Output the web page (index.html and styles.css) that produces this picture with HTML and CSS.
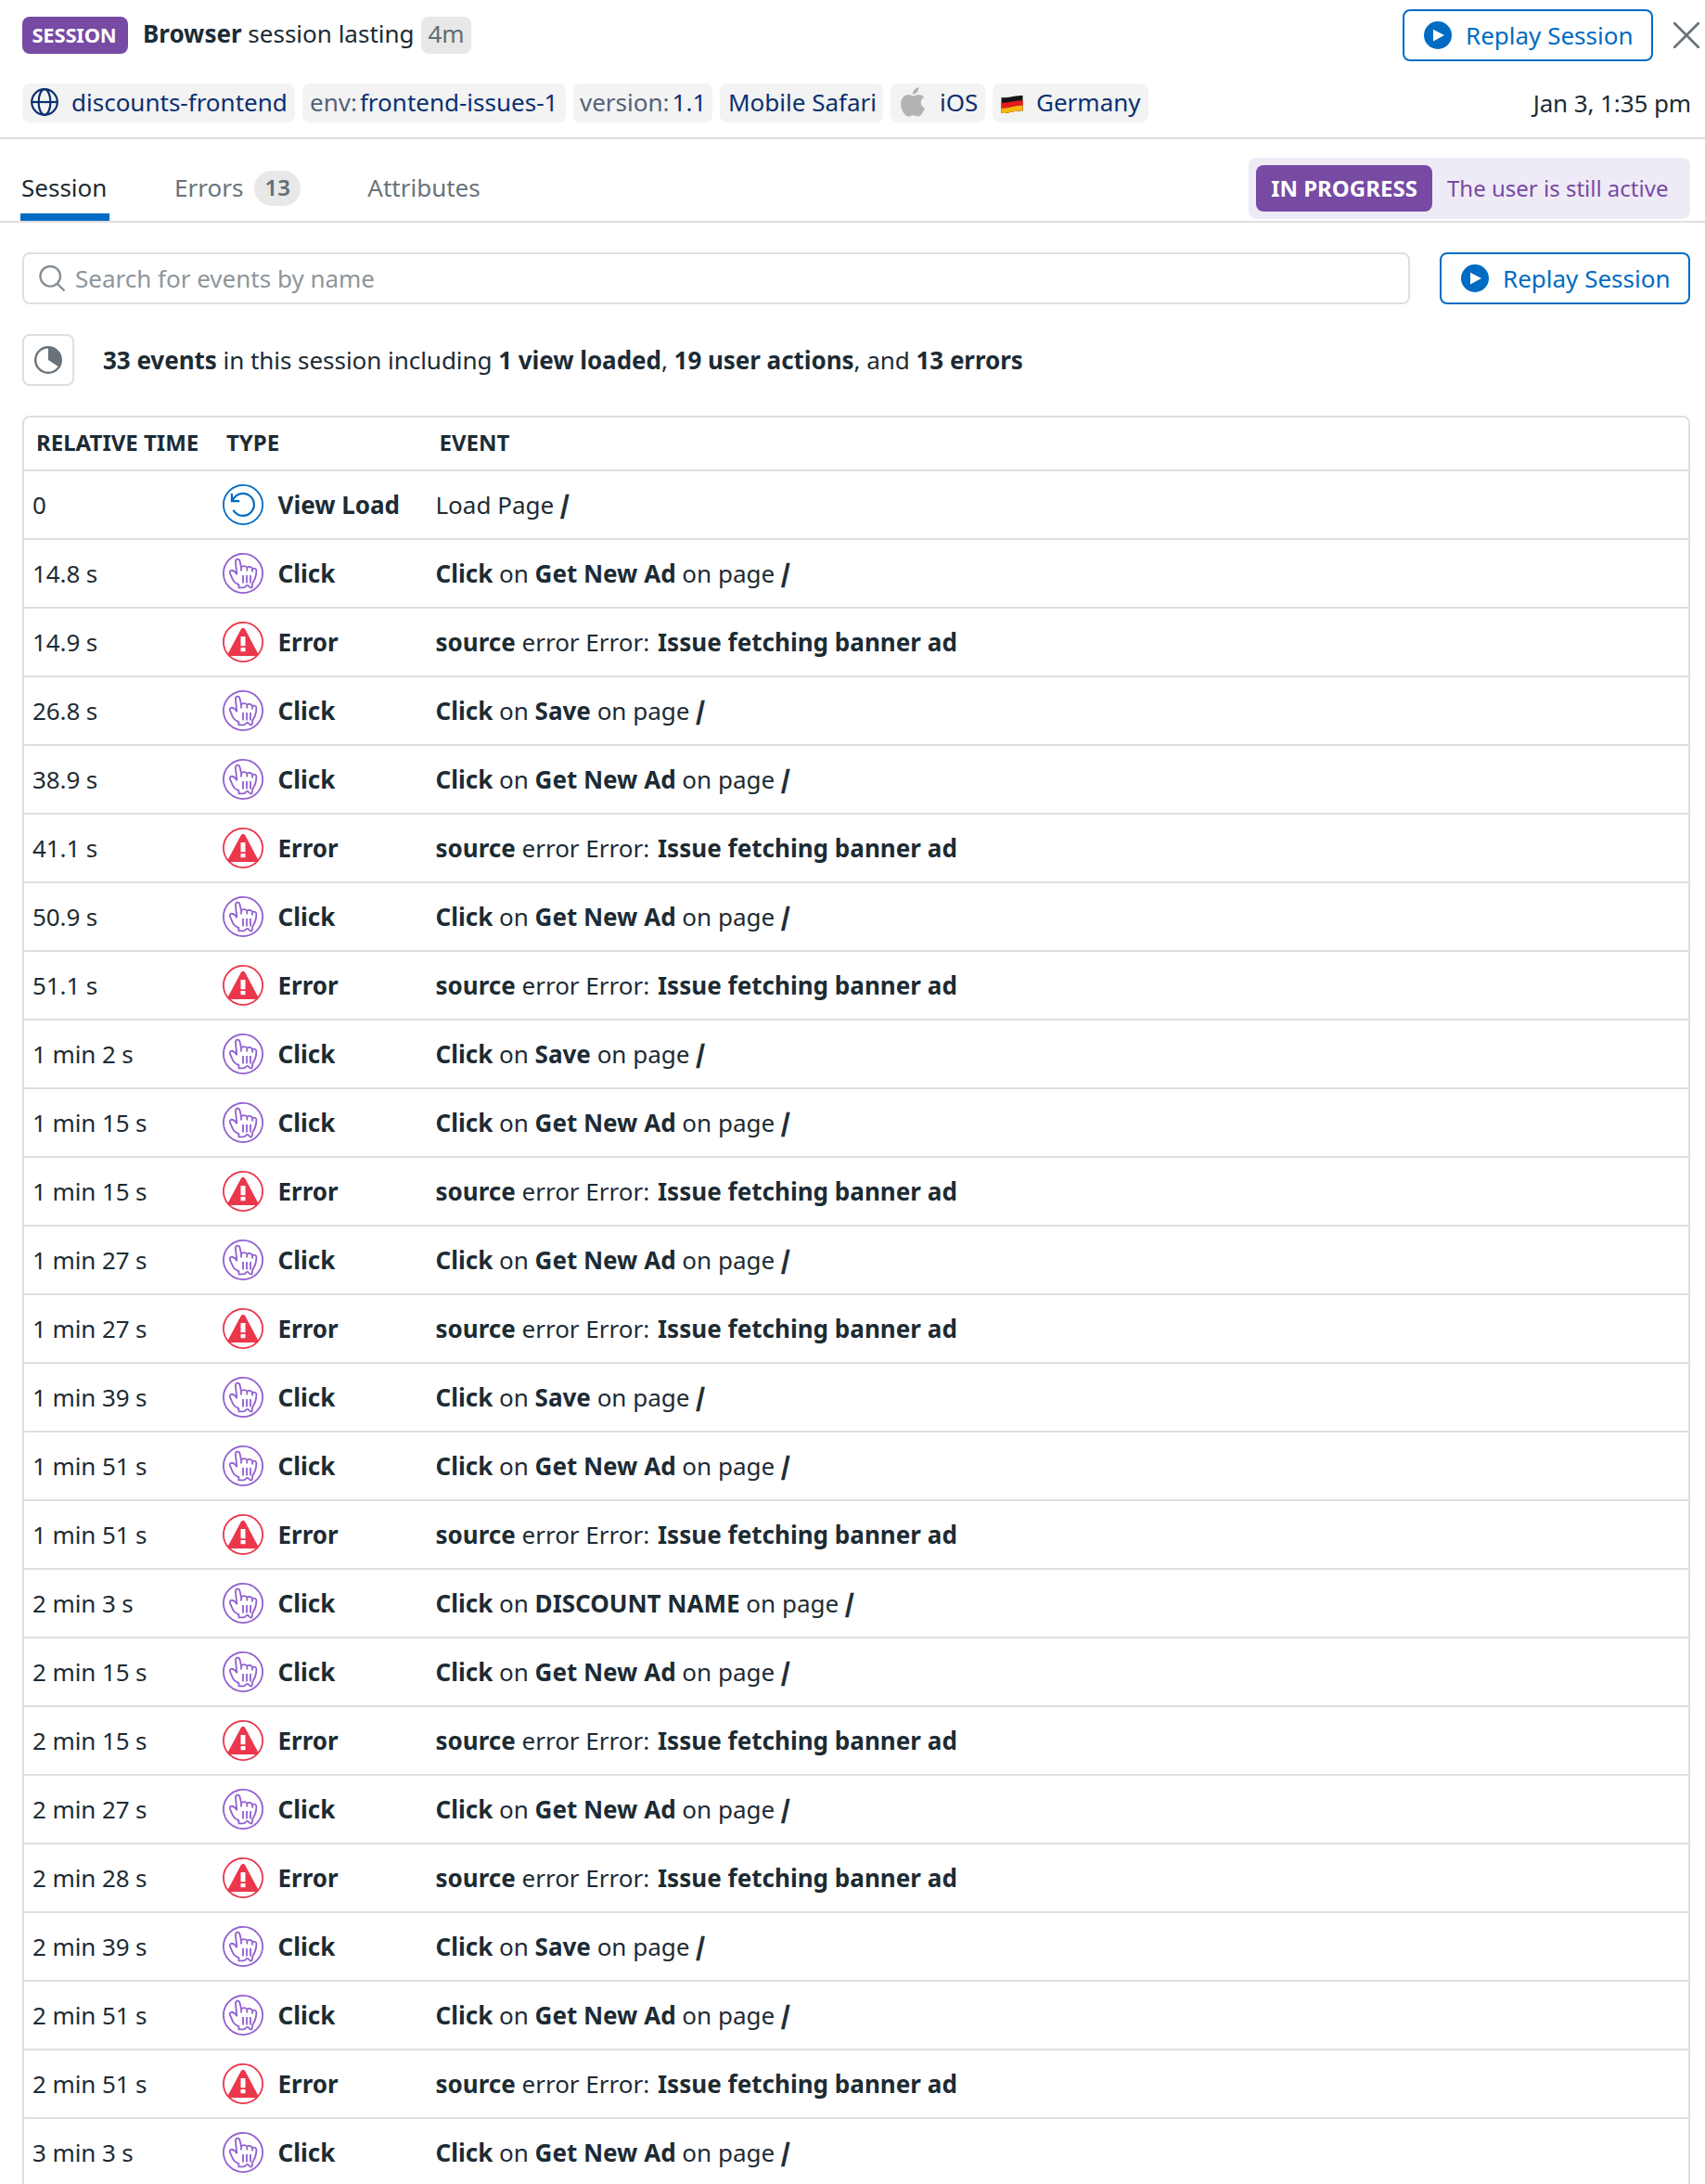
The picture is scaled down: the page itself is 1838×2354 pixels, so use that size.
FILE: index.html
```html
<!DOCTYPE html>
<html lang="en">
<head>
<meta charset="utf-8">
<title>Session</title>
<link rel="stylesheet" href="styles.css">
</head>
<body>
<svg class="sprite" width="0" height="0">
  <symbol id="play" viewBox="0 0 30 30"><circle cx="15" cy="15" r="15" fill="#006bc2"/><path d="M10 8.8v12.6L22 15z" fill="#fff"/></symbol>
  <symbol id="load" viewBox="0 0 44 44"><circle cx="22" cy="22" r="21.1" fill="none" stroke="#006bc2" stroke-width="1.8"/><path d="M11.4 27.8A12 12 0 1 0 10.6 17.8M9.9 10v8.1h8.3" fill="none" stroke="#006bc2" stroke-width="2.2"/></symbol>
  <symbol id="click" viewBox="0 0 44 44"><g fill="none" stroke="#9160cf" stroke-width="1.8" stroke-linejoin="round"><circle cx="22" cy="22" r="21.1"/><path d="M15.3 23.3 14 10.2C13.3 5.8 17.8 5.4 18.6 9.2L20 15.2V19.4M15.3 23.3C14.4 21 11.5 18.5 9.2 18.8C7.3 19.2 7.6 21.3 8.3 22.6L11 28.9C12 31.2 13.2 32.6 17.4 34.1V37.4H22.6C25 37.4 24.6 34.8 26.6 34.8C28.6 34.8 28 37.5 31.2 37.5C32.6 36 31.5 34 32.5 32.2C34.4 29.3 35.5 27 36 23.5L36.4 19.5C36.6 17 34.4 16.3 32 16.9C30.7 14.6 28 14.4 26.3 15.5C24.7 14 22 14 20.2 15.2M26.3 15.3V19.5M32 16.7V20.4M22 24v8.4M26 24v8.4M30 24v8.4"/></g></symbol>
  <symbol id="error" viewBox="0 0 44 44"><circle cx="22" cy="22" r="21.1" fill="none" stroke="#eb364b" stroke-width="1.8"/><path d="M19.6 8.4Q22 5.2 24.4 8.4L38.6 35.2Q38.3 37 36.4 37H7.6Q5.7 37 5.4 35.2z" fill="#eb364b"/><path d="M19.5 16h5v10.2h-5zM19.5 28h5v4.2h-5z" fill="#fff"/></symbol>
</svg>
<div class="panel">
  <header class="head">
    <div class="title-row">
      <span class="kind">SESSION</span>
      <span class="title"><b>Browser</b> session lasting</span>
      <span class="duration">4m</span>
      <button class="replay push"><svg class="i30"><use href="#play"/></svg>Replay Session</button>
      <svg class="close" viewBox="0 0 28 28"><path d="M1 1l26 26M27 1L1 27" stroke="#69737b" stroke-width="2.8" stroke-linecap="round"/></svg>
    </div>
    <div class="tag-row">
      <span class="tag t1"><svg class="globe" viewBox="0 0 30 30"><g fill="none" stroke="#0b3070" stroke-width="2.2"><circle cx="15" cy="15" r="13.8"/><ellipse cx="15" cy="15" rx="6.4" ry="13.8"/><path d="M1 15h28"/></g></svg>discounts-frontend</span>
      <span class="tag t2"><i>env:</i>frontend-issues-1</span>
      <span class="tag t3"><i>version:</i>1.1</span>
      <span class="tag t4">Mobile Safari</span>
      <span class="tag t5"><svg class="apple" viewBox="0 0 26 32"><path d="M19.4.3c.2 3.800-3 7.400-6.500 7.300C12.500 4.200 15.800.700 19.400.300zM13.400 9.700c1.600 0 3.200-1.600 6-1.600 2.300 0 4.400 1.200 5.700 3-4.800 2.900-4.200 9.300.900 11.500-1.600 4.500-4.400 9-7.100 9-2 0-2.900-1.300-5.300-1.300-2.500 0-3.500 1.300-5.300 1.300C4.600 31.600.2 25 .2 18.100c0-6 3.700-10 7.900-10 2.300 0 4 1.600 5.300 1.600z" fill="#b3b3b3"/></svg>iOS</span>
      <span class="tag t6"><svg class="flag" viewBox="0 0 24 21"><defs><clipPath id="wave"><path d="M.5 3C7 4.600 14 .2 23.500 1v16.500C14 16.500 7 21.600.5 19.500z"/></clipPath></defs><g clip-path="url(#wave)"><path d="M0 0h24v21H0z" fill="#151515"/><path d="M0 8.500C7 10 15 5.500 24 6.500V21H0z" fill="#e31c1c"/><path d="M0 14.500c7 1.500 15-3.500 24-2.500v9H0z" fill="#f2b90d"/></g></svg>Germany</span>
      <time class="date">Jan 3, 1:35 pm</time>
    </div>
  </header>
  <nav class="tabs">
    <a class="tab active">Session</a>
    <a class="tab errors">Errors<span class="count">13</span></a>
    <a class="tab">Attributes</a>
    <div class="status"><b>IN PROGRESS</b><span>The user is still active</span></div>
  </nav>
  <main class="content">
    <div class="search-row">
      <div class="search"><svg class="lens" viewBox="0 0 29 28"><g fill="none" stroke="#858e94" stroke-width="2.300"><circle cx="12.200" cy="11.800" r="10.800"/><path d="M19.500 19.500l8 8"/></g></svg>Search for events by name</div>
      <button class="replay"><svg class="i30"><use href="#play"/></svg>Replay Session</button>
    </div>
    <div class="summary">
      <span class="chart"><svg class="i30" viewBox="0 0 30 30"><circle cx="15" cy="15" r="13.800" fill="none" stroke="#69737b" stroke-width="2.400"/><path d="M15 15V1a14 14 0 0 1 11.600 21.500z" fill="#69737b"/></svg></span>
      <p><b>33 events</b> in this session including <b>1 view loaded</b>, <b>19 user actions</b>, and <b>13 errors</b></p>
    </div>
    <section class="table">
      <div class="row thead"><span>RELATIVE TIME</span><span>TYPE</span><span>EVENT</span></div>
      <div class="row"><span>0</span><b><svg><use href="#load"/></svg>View Load</b><span>Load Page <b class="path">/</b></span></div>
      <div class="row"><span>14.8 s</span><b><svg><use href="#click"/></svg>Click</b><span><b>Click</b> on <b>Get New Ad</b> on page <b class="path">/</b></span></div>
      <div class="row"><span>14.9 s</span><b><svg><use href="#error"/></svg>Error</b><span><b>source</b> error Error: <b class="msg">Issue fetching banner ad</b></span></div>
      <div class="row"><span>26.8 s</span><b><svg><use href="#click"/></svg>Click</b><span><b>Click</b> on <b>Save</b> on page <b class="path">/</b></span></div>
      <div class="row"><span>38.9 s</span><b><svg><use href="#click"/></svg>Click</b><span><b>Click</b> on <b>Get New Ad</b> on page <b class="path">/</b></span></div>
      <div class="row"><span>41.1 s</span><b><svg><use href="#error"/></svg>Error</b><span><b>source</b> error Error: <b class="msg">Issue fetching banner ad</b></span></div>
      <div class="row"><span>50.9 s</span><b><svg><use href="#click"/></svg>Click</b><span><b>Click</b> on <b>Get New Ad</b> on page <b class="path">/</b></span></div>
      <div class="row"><span>51.1 s</span><b><svg><use href="#error"/></svg>Error</b><span><b>source</b> error Error: <b class="msg">Issue fetching banner ad</b></span></div>
      <div class="row"><span>1 min 2 s</span><b><svg><use href="#click"/></svg>Click</b><span><b>Click</b> on <b>Save</b> on page <b class="path">/</b></span></div>
      <div class="row"><span>1 min 15 s</span><b><svg><use href="#click"/></svg>Click</b><span><b>Click</b> on <b>Get New Ad</b> on page <b class="path">/</b></span></div>
      <div class="row"><span>1 min 15 s</span><b><svg><use href="#error"/></svg>Error</b><span><b>source</b> error Error: <b class="msg">Issue fetching banner ad</b></span></div>
      <div class="row"><span>1 min 27 s</span><b><svg><use href="#click"/></svg>Click</b><span><b>Click</b> on <b>Get New Ad</b> on page <b class="path">/</b></span></div>
      <div class="row"><span>1 min 27 s</span><b><svg><use href="#error"/></svg>Error</b><span><b>source</b> error Error: <b class="msg">Issue fetching banner ad</b></span></div>
      <div class="row"><span>1 min 39 s</span><b><svg><use href="#click"/></svg>Click</b><span><b>Click</b> on <b>Save</b> on page <b class="path">/</b></span></div>
      <div class="row"><span>1 min 51 s</span><b><svg><use href="#click"/></svg>Click</b><span><b>Click</b> on <b>Get New Ad</b> on page <b class="path">/</b></span></div>
      <div class="row"><span>1 min 51 s</span><b><svg><use href="#error"/></svg>Error</b><span><b>source</b> error Error: <b class="msg">Issue fetching banner ad</b></span></div>
      <div class="row"><span>2 min 3 s</span><b><svg><use href="#click"/></svg>Click</b><span><b>Click</b> on <b>DISCOUNT NAME</b> on page <b class="path">/</b></span></div>
      <div class="row"><span>2 min 15 s</span><b><svg><use href="#click"/></svg>Click</b><span><b>Click</b> on <b>Get New Ad</b> on page <b class="path">/</b></span></div>
      <div class="row"><span>2 min 15 s</span><b><svg><use href="#error"/></svg>Error</b><span><b>source</b> error Error: <b class="msg">Issue fetching banner ad</b></span></div>
      <div class="row"><span>2 min 27 s</span><b><svg><use href="#click"/></svg>Click</b><span><b>Click</b> on <b>Get New Ad</b> on page <b class="path">/</b></span></div>
      <div class="row"><span>2 min 28 s</span><b><svg><use href="#error"/></svg>Error</b><span><b>source</b> error Error: <b class="msg">Issue fetching banner ad</b></span></div>
      <div class="row"><span>2 min 39 s</span><b><svg><use href="#click"/></svg>Click</b><span><b>Click</b> on <b>Save</b> on page <b class="path">/</b></span></div>
      <div class="row"><span>2 min 51 s</span><b><svg><use href="#click"/></svg>Click</b><span><b>Click</b> on <b>Get New Ad</b> on page <b class="path">/</b></span></div>
      <div class="row"><span>2 min 51 s</span><b><svg><use href="#error"/></svg>Error</b><span><b>source</b> error Error: <b class="msg">Issue fetching banner ad</b></span></div>
      <div class="row"><span>3 min 3 s</span><b><svg><use href="#click"/></svg>Click</b><span><b>Click</b> on <b>Get New Ad</b> on page <b class="path">/</b></span></div>
    </section>
  </main>
</div>
</body>
</html>
```
FILE: styles.css
```css
* { box-sizing: border-box; }
body {
  margin: 0;
  background: #fff;
  color: #1c2b34;
  font: 26px/36px "Noto Sans", sans-serif;
}
svg { flex: none; display: block; }
.sprite { position: absolute; }
.panel { width: 1838px; height: 2354px; overflow: hidden; }
.i30 { width: 30px; height: 30px; }

.head { height: 150px; padding: 10px 0 0 24px; border-bottom: 2px solid #dfdfdf; }
.title-row { display: flex; height: 56px; }
.kind {
  width: 114px; height: 40px; margin-top: 8px; padding-right: 2px;
  border-radius: 8px; background: #774aa4; color: #fff;
  font-size: 22px; font-weight: 700; line-height: 38px; text-align: center;
  letter-spacing: -.2px;
}
.title { margin: 8px 0 0 16px; width: 300px; white-space: nowrap; }
.duration {
  width: 54px; height: 40px; margin-top: 8px;
  border-radius: 8px; background: #e8e8e8; color: #626d75;
  text-align: center; line-height: 36px;
}
.replay {
  display: flex; align-items: center; gap: 15px;
  width: 270px; height: 56px; padding: 0 0 0 21px;
  border: 2px solid #006bc2; border-radius: 8px; background: #fff; color: #006bc2;
  font: inherit; white-space: nowrap;
}
.push { margin-left: auto; }
.close { width: 28px; height: 28px; margin: 14px 6px 0 22px; }

.tag-row { display: flex; gap: 8px; margin-top: 24px; }
.tag {
  display: flex; align-items: center; height: 42px; padding: 0 0 2px 8px;
  border-radius: 8px; background: #f3f3f3; color: #0b3070; white-space: nowrap;
}
.tag i { font-style: normal; color: #53617a; margin-right: 3px; }
.t1 { width: 294px; }
.t2 { width: 284px; }
.t3 { width: 150px; padding-left: 7px; }
.t4 { width: 176px; padding-left: 9px; }
.t5 { width: 102px; }
.t6 { width: 168px; }
.globe { width: 30px; height: 30px; margin: 0 14px 0 1px; }
.apple { width: 26px; height: 32px; margin: 0 16px 0 3px; }
.flag { width: 24px; height: 21px; margin: 5px 14px 0 1px; }
.date { margin: 3px 15px 0 auto; letter-spacing: -.1px; }

.tabs { display: flex; height: 90px; padding-left: 22px; border-bottom: 2px solid #dfdfdf; color: #69737b; }
.tab { height: 88px; padding: 34px 2px 0; line-height: 36px; display: flex; }
.tab.active { width: 96px; padding-left: 1px; border-bottom: 8px solid #006bc2; color: #1c2b34; }
.tab.errors { margin: 0 68px; }
.count {
  width: 50px; height: 38px; margin-left: 12px; border-radius: 19px;
  background: #e8e8e8; color: #626d75; font-size: 24px; font-weight: 600; text-align: center; line-height: 35px;
}
.status {
  display: flex; width: 476px; height: 66px; margin: 20px 16px 0 auto; padding: 8px;
  border-radius: 8px; background: #efebf6; color: #774aa4; line-height: 50px; white-space: nowrap;
}
.status b {
  flex: none; width: 190px; height: 50px; margin-right: 16px; border-radius: 8px;
  background: #774aa4; color: #fff; font-size: 24px; text-align: center;
}
.status span { font-size: 24px; }

.content { padding: 32px 16px 0 24px; }
.search-row { display: flex; gap: 32px; }
.search {
  display: flex; align-items: center; flex: 1; height: 56px; padding-left: 16px;
  border: 2px solid #dfdfdf; border-radius: 8px; color: #8d969b;
}
.lens { width: 29px; height: 28px; margin-right: 10px; }
.summary { display: flex; align-items: center; margin: 32px 0; gap: 31px; }
.summary p { margin: 0; letter-spacing: -.04px; }
.chart {
  display: grid; place-items: center; width: 56px; height: 56px;
  border: 2px solid #dfdfdf; border-radius: 8px;
}

.table { border: 2px solid #dfdfdf; border-radius: 8px 8px 0 0; }
.row {
  display: grid; grid-template-columns: 205px 229.500px 1fr; align-items: center;
  height: 74px; padding-left: 9px; border-bottom: 2px solid #dfdfdf; white-space: nowrap;
}
.row > span:first-child { letter-spacing: -.1px; }
.row > b { display: flex; align-items: center; gap: 15.500px; }
.row svg { width: 44px; height: 44px; }
.row.thead { height: 58px; padding: 0 0 2px 13px; font-size: 24px; font-weight: 700; }
.thead > span:first-child { letter-spacing: 0; }
.msg { margin-left: 2px; letter-spacing: .03px; }
.path {
  font-family: "Noto Sans CJK JP", sans-serif; font-weight: 900; line-height: 0;
  -webkit-text-stroke: .6px #1c2b34;
}
```
